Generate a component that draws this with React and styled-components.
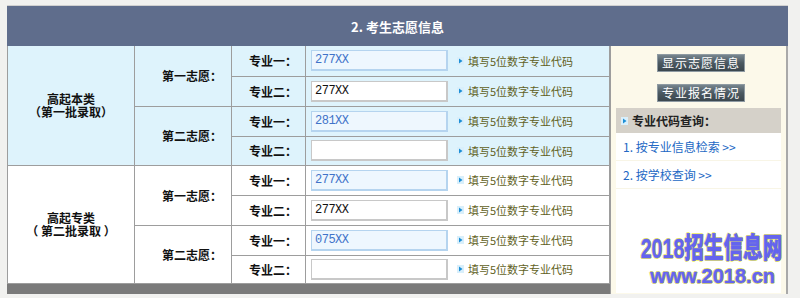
import React from "react";
import styled, { createGlobalStyle } from "styled-components";

const GlobalStyle = createGlobalStyle`
  html, body {
    margin: 0;
    padding: 0;
    background: #f1f1ef;
  }
  body {
    font-family: "Noto Sans CJK SC", "Liberation Sans", sans-serif;
    font-size: 12px;
  }
`;

const groups = [
  {
    title: "高起本类",
    sub: "（第一批录取）",
    tone: "blue",
    choices: [
      { name: "第一志愿：", majors: [{ v: "277XX", hot: true }, { v: "277XX" }] },
      { name: "第二志愿：", majors: [{ v: "281XX", hot: true }, { v: "" }] },
    ],
  },
  {
    title: "高起专类",
    sub: "（ 第二批录取 ）",
    tone: "white",
    choices: [
      { name: "第一志愿：", majors: [{ v: "277XX", hot: true }, { v: "277XX" }] },
      { name: "第二志愿：", majors: [{ v: "075XX", hot: true }, { v: "" }] },
    ],
  },
];

const rowHeights = [30, 30, 30, 29, 30, 30, 30, 28];

function Bullet() {
  return (
    <svg width="7" height="8" viewBox="0 0 7 8">
      <rect x="0" y="0" width="7" height="8" fill="#d9effb" />
      <path d="M2 1.5 L5.5 4 L2 6.5 Z" fill="#1d8fd6" />
    </svg>
  );
}

export default function App() {
  let r = 0;
  return (
    <>
      <GlobalStyle />
      <Frame>
        <Header>2. 考生志愿信息</Header>
        <Body>
          <LeftSide>
            <Table>
              <colgroup>
                <col style={{ width: 127 }} />
                <col style={{ width: 97 }} />
                <col style={{ width: 74 }} />
                <col />
              </colgroup>
              <tbody>
                {groups.map((g) =>
                  g.choices.map((c, ci) =>
                    c.majors.map((m, mi) => {
                      const h = rowHeights[r++];
                      return (
                        <Row key={g.title + ci + mi} $tone={g.tone} style={{ height: h }}>
                          {ci === 0 && mi === 0 && (
                            <GroupCell rowSpan={4}>
                              <GroupLine>{g.title}</GroupLine>
                              <GroupLine>{g.sub}</GroupLine>
                            </GroupCell>
                          )}
                          {mi === 0 && <ChoiceCell rowSpan={2}>{c.name}</ChoiceCell>}
                          <MajorCell>{mi === 0 ? "专业一：" : "专业二："}</MajorCell>
                          <InputCell>
                            <Field>
                              <CodeInput $hot={m.hot} defaultValue={m.v} />
                              <Hint>
                                <Bullet />
                                填写5位数字专业代码
                              </Hint>
                            </Field>
                          </InputCell>
                        </Row>
                      );
                    })
                  )
                )}
              </tbody>
            </Table>
            <BottomBar />
          </LeftSide>
          <Panel>
            <Buttons>
              <DarkButton>显示志愿信息</DarkButton>
              <DarkButton>专业报名情况</DarkButton>
            </Buttons>
            <Lookup>
              <LookupHead>
                <Bullet />
                专业代码查询：
              </LookupHead>
              <LinkRow>1. 按专业信息检索 &gt;&gt;</LinkRow>
              <LinkRow>2. 按学校查询 &gt;&gt;</LinkRow>
              <Mark>
                <MarkBig>2018招生信息网</MarkBig>
                <MarkSmall>www.2018.cn</MarkSmall>
              </Mark>
            </Lookup>
          </Panel>
        </Body>
      </Frame>
    </>
  );
}

const Frame = styled.div`
  margin: 5px 0 0 7px;
  width: 781px;
  border-top: 1px solid #d0d0d0;
`;

const Header = styled.div`
  height: 40px;
  background: #5f6d8c;
  color: #fff;
  font-weight: bold;
  font-size: 13px;
  display: flex;
  align-items: center;
  justify-content: center;
`;

const Body = styled.div`
  display: flex;
  align-items: stretch;
  border-right: 2px solid #a9a9a9;
`;

const LeftSide = styled.div`
  width: 603px;
  display: flex;
  flex-direction: column;
`;

const Table = styled.table`
  width: 603px;
  border-collapse: collapse;
  table-layout: fixed;
  td {
    border: 1px solid #9d9d9d;
    padding: 0;
  }
  tr:first-child td {
    border-top: none;
  }
`;

const Row = styled.tr`
  background: ${(p) => (p.$tone === "blue" ? "#def3fc" : "#ffffff")};
`;

const GroupCell = styled.td`
  text-align: center;
  font-weight: bold;
  color: #111;
  white-space: nowrap;
`;

const GroupLine = styled.div`
  height: 13px;
  line-height: 13px;
`;

const ChoiceCell = styled.td`
  text-align: right;
  font-weight: bold;
  padding-right: 9px !important;
  color: #111;
`;

const MajorCell = styled.td`
  text-align: right;
  font-weight: bold;
  padding-right: 8px !important;
  color: #111;
`;

const InputCell = styled.td`
  padding-left: 4px !important;
`;

const Field = styled.div`
  display: flex;
  align-items: center;
  gap: 9px;
`;

const CodeInput = styled.input`
  box-sizing: border-box;
  width: 137px;
  height: 21px;
  margin: 0 0 0 1px;
  padding: 0 3px;
  font-family: "Liberation Mono", monospace;
  font-size: 12px;
  letter-spacing: -0.5px;
  color: ${(p) => (p.$hot ? "#3f73c9" : "#111")};
  background: ${(p) => (p.$hot ? "#eef7fe" : "#fff")};
  border: 2px solid ${(p) => (p.$hot ? "#b5d4ef" : "#c8c8c8")};
  border-width: 1px 2px 2px 1px;
  outline: none;
`;

const Hint = styled.span`
  display: flex;
  align-items: center;
  gap: 4px;
  color: #62621e;
  font-size: 11px;
  white-space: nowrap;
`;

const BottomBar = styled.div`
  height: 10px;
  background: #7a7a7a;
`;

const Panel = styled.div`
  flex: 1;
  min-width: 0;
  background: #fcf9ea;
  border-left: 1px solid #9d9d9d;
  padding: 0 5px;
  display: flex;
  flex-direction: column;
`;

const Buttons = styled.div`
  display: flex;
  flex-direction: column;
  align-items: center;
  gap: 12px;
  padding: 8px 0 6px 5px;
`;

const DarkButton = styled.button`
  width: 88px;
  height: 18px;
  padding: 0;
  border: 1px solid #8e9aa2;
  background: linear-gradient(#77858e, #4b5961 50%, #3b474e);
  color: #fff;
  font-family: "Noto Sans CJK SC", sans-serif;
  font-size: 12px;
  letter-spacing: 1px;
  line-height: 16px;
`;

const Lookup = styled.div`
  flex: 1;
  display: flex;
  flex-direction: column;
  background: #fff;
  margin-bottom: 1px;
`;

const LookupHead = styled.div`
  height: 25px;
  background: #d5d1c9;
  display: flex;
  align-items: center;
  gap: 4px;
  padding-left: 5px;
  font-weight: bold;
  color: #222;
`;

const LinkRow = styled.div`
  height: 27px;
  border-bottom: 1px solid #f8f5e6;
  display: flex;
  align-items: center;
  padding-left: 7px;
  color: #2268c4;
`;

const Mark = styled.div`
  flex: 1;
  display: flex;
  flex-direction: column;
  align-items: flex-end;
  justify-content: flex-end;
  padding: 0 0 5px 0;
  font-family: "Liberation Sans", "Noto Sans CJK SC", sans-serif;
  font-weight: 900;
  color: #6464ee;
  white-space: nowrap;
  -webkit-text-stroke: 0.5px #6464ee;
  text-shadow: 1px 0 #eded5c, -1px 0 #eded5c, 0 1px #eded5c, 0 -1px #eded5c;
`;

const MarkBig = styled.div`
  font-size: 28px;
  line-height: 30px;
  transform: scaleX(0.7);
  transform-origin: right center;
  margin-right: -1px;
`;

const MarkSmall = styled.div`
  font-size: 20px;
  line-height: 24px;
  margin-right: 6px;
`;
